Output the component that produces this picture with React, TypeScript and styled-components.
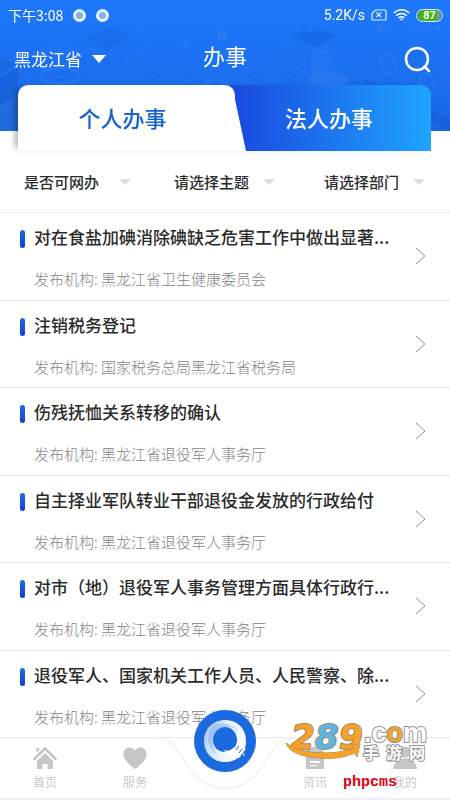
import React from "react";
import styled, { createGlobalStyle } from "styled-components";

const GlobalStyle = createGlobalStyle`
  *, *::before, *::after { box-sizing: border-box; }
  body {
    margin: 0;
    background: #fff;
    font-family: "Noto Sans CJK SC", "Noto Sans", sans-serif;
    color: #2b2b2b;
  }
  button, select { font: inherit; color: inherit; background: none; border: 0; padding: 0; margin: 0; }
  ul { list-style: none; margin: 0; padding: 0; }
  a { color: inherit; text-decoration: none; }
`;

const Page = styled.div`
  min-height: 100vh;
  display: flex;
  flex-direction: column;
`;

const Header = styled.header`
  position: relative;
  height: 131px;
  color: #fff;
  background: linear-gradient(180deg, #1d78fb 0%, #1b6fee 60%, #1867e0 100%);
`;

const HeaderArt = styled.svg`
  position: absolute;
  inset: 0;
  width: 100%;
  height: 100%;
`;

const StatusBar = styled.div`
  position: relative;
  display: flex;
  align-items: center;
  height: 30px;
  padding: 0 7px 0 8px;
  font-size: 14px;
  line-height: 20px;
`;

const StatusDot = styled.span`
  width: 13px;
  height: 13px;
  margin-left: 10px;
  border-radius: 50%;
  border: 3px solid #e6f5ff;
  background: #85adf8;
`;

const StatusRight = styled.div`
  display: flex;
  align-items: center;
  gap: 6px;
  margin-left: auto;
  font-family: Roboto, sans-serif;
  font-size: 14px;
`;

const Battery = styled.span`
  width: 27px;
  height: 13px;
  border: 1px solid #dcecff;
  border-radius: 7px;
  padding: 0 1px;
  font-size: 11px;
  font-weight: 700;
  line-height: 11px;
  text-align: center;
  background: linear-gradient(90deg, #43b51c 78%, #74979c 78%);
  background-clip: content-box;
`;

const TitleBar = styled.div`
  position: relative;
  display: grid;
  grid-template-columns: 1fr auto 1fr;
  align-items: center;
  height: 54px;
  padding: 0 14px;
`;

const Region = styled.label`
  display: flex;
  align-items: center;
  gap: 10px;
  padding-top: 3px;
`;

const RegionSelect = styled.select`
  appearance: none;
  font-size: 17px;
  line-height: 24px;
  font-weight: 400;
  outline: 0;
  option { color: #222; }
`;

const Title = styled.h1`
  margin: 0;
  padding-bottom: 4px;
  font-size: 22px;
  line-height: 30px;
  font-weight: 400;
`;

const SearchButton = styled.button`
  justify-self: end;
  display: flex;
  padding-top: 4px;
  margin-right: 5px;
`;

const Tabs = styled.div`
  position: relative;
  display: grid;
  grid-template-columns: 217px 1fr;
  height: 66px;
  margin: -46px 19px 0 18px;
  border-radius: 10px 10px 0 0;
  background: linear-gradient(90deg, #1a4be0 53%, #1fa4ff 100%);
  box-shadow: -6px 0 6px -3px rgba(0, 0, 0, 0.3);
`;

const Tab = styled.button<{ $active?: boolean }>`
  position: relative;
  z-index: ${(p) => (p.$active ? 1 : 0)};
  padding: 0 8px 3px 0;
  font-size: 22px;
  line-height: 30px;
  font-weight: 500;
  color: ${(p) => (p.$active ? "#1763cd" : "#fff")};
  background: ${(p) => (p.$active ? "#fff" : "transparent")};
  border-radius: 10px 10px 0 0;
  &::after {
    content: ${(p) => (p.$active ? '""' : "none")};
    position: absolute;
    z-index: -1;
    top: 0;
    bottom: 0;
    right: -11px;
    width: 60px;
    background: #fff;
    border-top-right-radius: 12px;
    transform: skewX(12deg);
    transform-origin: bottom;
  }
`;

const Filters = styled.div`
  display: grid;
  grid-template-columns: repeat(3, 1fr);
  height: 62px;
  border-bottom: 1px solid #ececec;
`;

const Filter = styled.label<{ $inset?: boolean }>`
  display: flex;
  align-items: center;
  justify-content: space-between;
  padding: 0 ${(p) => (p.$inset ? "19px" : "25px")} 0 24px;
`;

const FilterSelect = styled.select`
  appearance: none;
  font-size: 15px;
  line-height: 22px;
  font-weight: 500;
  outline: 0;
`;

const List = styled.ul`
  flex: 1;
  display: flex;
  flex-direction: column;
`;

const Item = styled.li`
  flex: 1;
  border-bottom: 1px solid #e9e9e9;
`;

const ItemLink = styled.a`
  display: grid;
  grid-template-columns: 5px minmax(0, 1fr) 11px;
  column-gap: 9px;
  padding: 11px 24px 8px 20px;
`;

const Marker = styled.span`
  height: 18px;
  margin-top: 6px;
  border-radius: 3px;
  background: linear-gradient(180deg, #1b6fd6, #153bd9);
`;

const ItemText = styled.div`
  display: flex;
  flex-direction: column;
  gap: 19px;
`;

const ItemTitle = styled.h2`
  margin: 0;
  font-size: 17px;
  line-height: 25px;
  font-weight: 500;
  white-space: nowrap;
  overflow: hidden;
  text-overflow: ellipsis;
`;

const Agency = styled.p`
  margin: 0;
  font-size: 15px;
  line-height: 22px;
  font-weight: 300;
  color: #858585;
`;

const Chevron = styled.svg`
  align-self: center;
  margin-bottom: 2px;
`;

const Nav = styled.nav`
  position: sticky;
  bottom: 0;
  display: grid;
  grid-template-columns: repeat(5, 1fr);
  height: 62px;
  background: #fff;
  border-bottom: 2px solid #f0f0f0;
`;

const NavLink = styled.a`
  display: flex;
  flex-direction: column;
  align-items: center;
  gap: 3px;
  padding-top: 8px;
  font-size: 12px;
  line-height: 18px;
  font-weight: 300;
  color: #b2b2b2;
`;

const NavCurve = styled.svg`
  position: absolute;
  top: -1px;
  left: 50%;
  transform: translateX(-50%);
`;

const CenterButton = styled.button`
  position: relative;
  justify-self: center;
  width: 62px;
  height: 62px;
  margin-top: -28px;
  border-radius: 50%;
  background: #1b6ae0;
`;

const Watermark = styled.svg`
  position: absolute;
  right: 22px;
  top: -18px;
  overflow: visible;
  pointer-events: none;
`;

const FooterMark = styled.span`
  position: absolute;
  right: 53px;
  bottom: 7px;
  font-family: "Liberation Mono", monospace;
  font-size: 15px;
  line-height: 16px;
  font-weight: 700;
  color: #e00010;
  pointer-events: none;
`;

const Triangle = ({ color, width, height }: { color: string; width: number; height: number }) => (
  <svg width={width} height={height} viewBox="0 0 14 8" preserveAspectRatio="none" aria-hidden="true">
    <path d="M0 0H14L7 8Z" fill={color} />
  </svg>
);

const items = [
  ["对在食盐加碘消除碘缺乏危害工作中做出显著...", "黑龙江省卫生健康委员会"],
  ["注销税务登记", "国家税务总局黑龙江省税务局"],
  ["伤残抚恤关系转移的确认", "黑龙江省退役军人事务厅"],
  ["自主择业军队转业干部退役金发放的行政给付", "黑龙江省退役军人事务厅"],
  ["对市（地）退役军人事务管理方面具体行政行...", "黑龙江省退役军人事务厅"],
  ["退役军人、国家机关工作人员、人民警察、除...", "黑龙江省退役军人事务厅"],
];

const filters = ["是否可网办", "请选择主题", "请选择部门"];

function Backdrop() {
  return (
    <HeaderArt viewBox="0 0 450 131" preserveAspectRatio="xMidYMid slice" aria-hidden="true">
      <g fill="#1256c4" opacity=".38">
        <path d="M86 38L109 27L131 37L107 51Z" opacity=".5" />
        <path d="M293 35L304 30L311 33L318 29L338 36L315 47Z" opacity=".8" />
        <path d="M0 78L18 67V131H0Z" />
        <path d="M0 57L17 64L0 74Z" opacity=".6" />
        <path d="M431 110L450 120V130L431 120Z" />
        <path d="M365 79L378 85H365Z" />
      </g>
      <g fill="none" stroke="#5a9dff" opacity=".14">
        <path d="M112 47L139 31L153 40L126 62L184 92M126 62L151 45" />
        <path d="M240 85L301 50L273 34M272 66L319 92M282 60L331 87" />
        <ellipse cx="60" cy="76" rx="20" ry="8" strokeWidth="3" />
        <ellipse cx="60" cy="70" rx="18" ry="7" />
        <path d="M51 47V67M71 47V67" />
        <ellipse cx="61" cy="47" rx="10" ry="5" />
        <ellipse cx="388" cy="64" rx="7" ry="10" strokeWidth="3" transform="rotate(-25 388 64)" />
        <ellipse cx="427" cy="83" rx="7" ry="10" strokeWidth="3" transform="rotate(-25 427 83)" />
        <path d="M202 85L216 78L230 85L216 94Z" strokeWidth="2" />
        <path d="M392 18L450 36" />
      </g>
      <g fill="#6aa9ff" opacity=".14">
        <circle cx="186" cy="43" r="4" />
        <circle cx="222" cy="36" r="5" />
        <circle cx="188" cy="80" r="2" />
        <circle cx="205" cy="72" r="2" />
        <path d="M312 47L331 50L335 74Q326 83 310 75Z" opacity=".6" />
        <ellipse cx="328" cy="80" rx="20" ry="8" />
        <path d="M377 26L381 24L386 31L379 32Z" />
        <path d="M0 105L18 94V131H0Z" />
      </g>
    </HeaderArt>
  );
}

const navIcons = {
  home: (
    <svg width="24" height="24" viewBox="0 0 24 24" fill="#c6c6c6" aria-hidden="true">
      <path d="M1.500 13L12 2.500L22.500 13" fill="none" stroke="#c6c6c6" strokeWidth="2.500" strokeLinejoin="round" strokeLinecap="round" />
      <path d="M12 7L20 15V23H14.500V18H9.500V23H4V15ZM3 2.500L5.500 1.500L6.500 4L4 6.500Z" />
    </svg>
  ),
  heart: (
    <svg width="24" height="24" viewBox="0 0 24 24" fill="#c6c6c6" aria-hidden="true">
      <path d="M12 23Q10 22 5 17Q0 12 .4 8C.5 1 8.500-.5 12 4.500C15.500-.5 23.500 1 23.600 8Q24 12 19 17Q14 22 12 23Z" />
    </svg>
  ),
  news: (
    <svg width="24" height="24" viewBox="0 0 24 24" fill="#c6c6c6" aria-hidden="true">
      <path fillRule="evenodd" d="M3 1H16L21 6V23H3ZM7 15V17H17V15ZM7 19V20H14V19Z" />
    </svg>
  ),
  user: (
    <svg width="24" height="24" viewBox="0 0 24 24" fill="#c6c6c6" aria-hidden="true">
      <circle cx="12" cy="6" r="5.500" />
      <path d="M0 23Q1 13 12 12Q23 13 24 23Z" />
    </svg>
  ),
};

export default function App() {
  return (
    <Page>
      <GlobalStyle />
      <Header>
        <Backdrop />
        <StatusBar>
          下午3:08
          <StatusDot />
          <StatusDot />
          <StatusRight>
            5.2K/s
            <svg width="16" height="12" viewBox="0 0 16 12" fill="none" stroke="#e4f1ff" strokeWidth="1.2" aria-hidden="true">
              <path d="M4.500 1H14Q15 1 15 2V10Q15 11 14 11H2Q1 11 1 10V4.500ZM5.500 3.500L10 8M10 3.500L5.500 8" />
            </svg>
            <svg width="17" height="12" viewBox="0 0 17 12" fill="none" stroke="#fff" strokeWidth="1.500" aria-hidden="true">
              <path d="M.7 4Q8.500-2.300 16.300 4M3.200 6.600Q8.500 2.300 13.800 6.600M5.500 9Q8.500 6.600 11.500 9" />
              <path d="M7 10Q8.500 8.900 10 10L8.500 11.700Z" fill="#fff" stroke="none" />
            </svg>
            <Battery>87</Battery>
          </StatusRight>
        </StatusBar>
        <TitleBar>
          <Region>
            <RegionSelect aria-label="地区">
              <option>黑龙江省</option>
            </RegionSelect>
            <Triangle color="#fff" width={14} height={8} />
          </Region>
          <Title>办事</Title>
          <SearchButton aria-label="搜索">
            <svg width="27" height="27" viewBox="0 0 27 27" fill="none" stroke="#fff" strokeWidth="2.500" strokeLinecap="round" aria-hidden="true">
              <circle cx="13" cy="13" r="11" />
              <path d="M20.500 20.500L25 25" strokeWidth="2.600" />
            </svg>
          </SearchButton>
        </TitleBar>
      </Header>

      <Tabs role="tablist">
        <Tab $active role="tab" aria-selected="true">个人办事</Tab>
        <Tab role="tab" aria-selected="false">法人办事</Tab>
      </Tabs>

      <Filters>
        {filters.map((name, i) => (
          <Filter key={name} $inset={i === 0}>
            <FilterSelect aria-label={name}>
              <option>{name}</option>
            </FilterSelect>
            <Triangle color="#dedede" width={12} height={6} />
          </Filter>
        ))}
      </Filters>

      <List>
        {items.map(([title, agency]) => (
          <Item key={title}>
            <ItemLink href="#">
              <Marker />
              <ItemText>
                <ItemTitle>{title}</ItemTitle>
                <Agency>发布机构: {agency}</Agency>
              </ItemText>
              <Chevron width="11" height="18" viewBox="0 0 11 18" fill="none" stroke="#8f8f8f" aria-hidden="true">
                <path d="M1 1L10 9L1 17" />
              </Chevron>
            </ItemLink>
          </Item>
        ))}
      </List>

      <Nav>
        <NavCurve width="150" height="54" viewBox="0 0 150 54" fill="none" aria-hidden="true">
          <path d="M0 1H7C36 1 32 51 75 51S114 1 143 1H150" stroke="#f4f4f4" strokeWidth="2" />
        </NavCurve>
        <NavLink href="#">{navIcons.home}首页</NavLink>
        <NavLink href="#">{navIcons.heart}服务</NavLink>
        <CenterButton aria-label="办事">
          <svg width="62" height="62" viewBox="0 0 62 62" aria-hidden="true">
            <defs>
              <linearGradient id="ring" x1="0" y1="0.3" x2="1" y2="0.7">
                <stop offset="0" stopColor="#a9cbf8" />
                <stop offset=".5" stopColor="#eaf3fe" />
                <stop offset="1" stopColor="#fff" />
              </linearGradient>
            </defs>
            <path fill="url(#ring)" fillRule="evenodd" d="M31 10C44 10 52 19 52 31C52 44 43 52 31 52C19 52 10 43 10 31C10 19 19 10 31 10ZM31 17C24 17 19 23 19 30C19 37 24 42 31 42C38 42 43 37 43 30C43 23 38 17 31 17Z" />
            <path d="M20 15C27 13 37 13 44 20C35 14 23 17 19 26C17 33 19 39 23 44C13 38 11 24 20 15Z" fill="#5b9af0" opacity=".35" />
            <path d="M45 48L54 40V50L46 54Z" fill="#1b6ae0" />
            <path d="M30 40Q36 42 39 38L43 36L46 33L47 37L50 34L49 39L52 39L49 42L51 46L47 44L46 48L43 45L41 49L38 46Q33 46 30 40Z" fill="#fff" />
            <path d="M42 40L45 36M45 43L48 39M47 46L49 43" stroke="#1b6ae0" />
          </svg>
        </CenterButton>
        <NavLink href="#">{navIcons.news}资讯</NavLink>
        <NavLink href="#">{navIcons.user}我的</NavLink>
        <Watermark width="144" height="46" viewBox="0 0 144 46" aria-label="289.com 手游网">
          <g fontFamily="DejaVu Sans, sans-serif" fontWeight="700" paintOrder="stroke" strokeLinejoin="round">
            <g fontSize="34" fontStyle="italic" stroke="#a48a63" strokeWidth="2">
              <text x="7" y="29" fill="#f5a22d">2</text>
              <text x="55" y="29" fill="#f5a22d">9</text>
              <text x="31" y="29" fill="#5bb5e5">8</text>
            </g>
            <text x="80" y="22" fontSize="27" fontFamily="Liberation Sans, sans-serif" fill="#fff" stroke="#949494" strokeWidth="2">
              .c<tspan fill="#f5a22d">o</tspan>m
            </text>
            <path d="M2 23Q14 33 40 33Q58 33 70 28L68 25L76 24L73 37L71 33Q55 40 36 38Q6 36 2 23Z" fill="#f5a22d" stroke="#a48a63" />
            <g fontSize="16" fontFamily="Noto Sans CJK SC, sans-serif" fill="#fff" stroke="#949494" strokeWidth="2">
              <text x="79" y="39">手</text>
              <text x="102" y="39">游</text>
              <text x="125" y="39">网</text>
            </g>
          </g>
        </Watermark>
        <FooterMark>phpcms</FooterMark>
      </Nav>
    </Page>
  );
}
